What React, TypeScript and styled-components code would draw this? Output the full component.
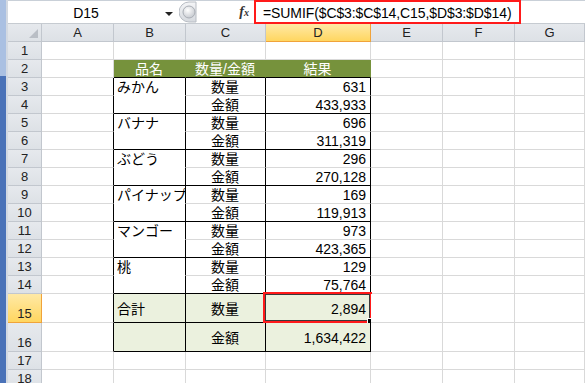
import React from 'react';
import styled, { createGlobalStyle } from 'styled-components';

const GlobalStyle = createGlobalStyle`
  html, body {
    margin: 0;
    padding: 0;
    background: #ffffff;
    overflow: hidden;
  }
  body {
    font-family: "Liberation Sans", "Noto Sans CJK JP", sans-serif;
    font-size: 14px;
    color: #000;
  }
`;

const GREEN = '#76923c';
const LIGHT = '#ebf1de';
const GRID = '#d9d9d9';

const Window = styled.div`
  display: flex;
  width: 585px;
  height: 383px;
  overflow: hidden;
`;

const SideBar = styled.div`
  width: 6px;
  flex-shrink: 0;
  background: linear-gradient(#aac0e2 0, #aac0e2 76px, #4a72b8 76px, #4a72b8 100%);
  border-right: 2px solid #d3d9e2;
`;

const Main = styled.div`
  flex: 1;
  display: flex;
  flex-direction: column;
  min-width: 0;
`;

const RibbonEdge = styled.div`
  height: 4px;
  background: #dfe4ea;
  border-bottom: 1px solid #c9d0d8;
`;

const FormulaBar = styled.div`
  height: 24px;
  display: flex;
  align-items: stretch;
  background: #ffffff;
  border-bottom: 1px solid #c6cbd1;
`;

const NameBox = styled.div`
  width: 170px;
  display: flex;
  align-items: center;
  position: relative;
`;

const NameText = styled.span`
  flex: 1;
  text-align: center;
  font-size: 14px;
  padding-right: 14px;
  padding-top: 1px;
`;

const Caret = styled.span`
  position: absolute;
  right: 5px;
  top: 11px;
  width: 0;
  height: 0;
  border-left: 4px solid transparent;
  border-right: 4px solid transparent;
  border-top: 4px solid #222;
`;

const Splitter = styled.div`
  width: 20px;
  display: flex;
  align-items: center;
  justify-content: center;
`;

const FxButton = styled.span`
  width: 56px;
  display: flex;
  align-items: center;
  justify-content: flex-end;
  padding-right: 5px;
  box-sizing: border-box;
  font-family: "Liberation Serif", serif;
  font-style: italic;
  font-weight: bold;
  font-size: 14px;
  color: #333;

  sub {
    font-size: 10px;
    vertical-align: -1px;
  }
`;

const FormulaArea = styled.div`
  flex: 1;
  display: flex;
  align-items: stretch;
`;

const Callout = styled.div`
  display: flex;
  align-items: center;
  margin-top: -1px;
  margin-bottom: -1px;
  padding: 1px 8px 0 7px;
  border: 2px solid #ff1a1a;
  white-space: nowrap;
  font-size: 14px;
  letter-spacing: -0.1px;
`;

const Sheet = styled.div`
  display: grid;
  grid-template-columns: 34px 72px 72px 80px 105px 72px 72px 1fr;
  grid-template-rows: 18px repeat(14, 18px) 29px 29px 18px 18px;
`;

type Edge = 'grid' | 'black' | 'none';

const Header = styled.div<{ $active?: boolean; $row?: boolean }>`
  box-sizing: border-box;
  display: flex;
  justify-content: center;
  align-items: ${({ $row }) => ($row ? 'flex-end' : 'center')};
  font-size: 13px;
  color: #222;
  background: ${({ $active }) =>
    $active ? 'linear-gradient(#ffe9a6, #ffd660)' : 'linear-gradient(#e6e9ed, #dde1e6)'};
  border-right: 1px solid ${({ $active }) => ($active ? '#f0a33a' : '#c2c7ce')};
  border-bottom: 1px solid ${({ $active }) => ($active ? '#f0a33a' : '#c2c7ce')};
  line-height: 16px;
`;

const Corner = styled(Header)`
  position: relative;

  &::after {
    content: '';
    position: absolute;
    right: 3px;
    bottom: 3px;
    width: 0;
    height: 0;
    border-left: 9px solid transparent;
    border-bottom: 9px solid #b9bec5;
  }
`;

const edgeColor = (edge: Edge, fill: string) =>
  edge === 'black' ? '#000' : edge === 'none' ? fill : fill === '#ffffff' ? GRID : fill;

const Cell = styled.div<{
  $right: Edge;
  $bottom: Edge;
  $fill: string;
  $align: 'left' | 'center' | 'right';
  $color?: string;
  $selected?: boolean;
}>`
  box-sizing: border-box;
  position: relative;
  display: flex;
  align-items: center;
  justify-content: ${({ $align }) =>
    $align === 'left' ? 'flex-start' : $align === 'right' ? 'flex-end' : 'center'};
  padding: 1px 4px 0 3px;
  background: ${({ $fill }) => $fill};
  color: ${({ $color }) => $color || '#000'};
  border-right: 1px solid ${({ $right, $fill }) => edgeColor($right, $fill)};
  border-bottom: 1px solid ${({ $bottom, $fill }) => edgeColor($bottom, $fill)};
  white-space: nowrap;
  overflow: ${({ $selected }) => ($selected ? 'visible' : 'hidden')};
  font-size: 14px;
  line-height: 16px;
`;

const Selection = styled.div`
  position: absolute;
  left: -3px;
  top: -2px;
  right: -2px;
  bottom: -1px;
  border: 2px solid #ff1a1a;
  box-shadow: inset 0 0 0 1px #3a3a3a;
  pointer-events: none;
`;

const Handle = styled.div`
  position: absolute;
  right: -4px;
  bottom: -4px;
  width: 5px;
  height: 5px;
  background: #000;
  border: 1px solid #fff;
`;

const columns = ['A', 'B', 'C', 'D', 'E', 'F', 'G'];

const fruits: [string, number, number][] = [
  ['みかん', 631, 433933],
  ['バナナ', 696, 311319],
  ['ぶどう', 296, 270128],
  ['パイナップル', 169, 119913],
  ['マンゴー', 973, 423365],
  ['桃', 129, 75764],
];

const fmt = (n: number) => n.toLocaleString('en-US');

const rowCount = 18;

function cellText(r: number, c: number): string {
  if (r === 2) return ['', '品名', '数量/金額', '結果'][c] || '';
  if (r >= 3 && r <= 14) {
    const [name, qty, amt] = fruits[Math.floor((r - 3) / 2)];
    const first = (r - 3) % 2 === 0;
    if (c === 1) return first ? name : '';
    if (c === 2) return first ? '数量' : '金額';
    if (c === 3) return fmt(first ? qty : amt);
  }
  if (r === 15) return ['', '合計', '数量', '2,894'][c] || '';
  if (r === 16) return ['', '', '金額', '1,634,422'][c] || '';
  return '';
}

function cellProps(r: number, c: number) {
  const inTable = c >= 1 && c <= 3;
  const body = r >= 3 && r <= 16;
  let fill = '#ffffff';
  if (inTable && r === 2) fill = GREEN;
  if (inTable && (r === 15 || r === 16)) fill = LIGHT;

  let right: Edge = 'grid';
  if ((c === 0 || inTable) && body) right = 'black';
  if ((c === 1 || c === 2) && r === 2) right = 'none';

  let bottom: Edge = 'grid';
  if (inTable) {
    if (r === 2 || (r >= 4 && r <= 14 && r % 2 === 0) || r === 15 || r === 16) bottom = 'black';
    else if (r >= 3 && r <= 13 && c === 1) bottom = 'none';
  }

  const align: 'left' | 'center' | 'right' =
    c === 1 && r !== 2 ? 'left' : c === 3 && r !== 2 ? 'right' : 'center';
  return { fill, right, bottom, align, color: r === 2 && inTable ? '#ffffff' : undefined };
}

const FxSplitter = () => (
  <svg width="18" height="22" viewBox="0 0 18 22">
    <defs>
      <linearGradient id="pill" x1="0" y1="0" x2="0" y2="1">
        <stop offset="0" stopColor="#f4f5f7" />
        <stop offset="1" stopColor="#d5d9de" />
      </linearGradient>
      <radialGradient id="knob" cx="0.4" cy="0.35" r="0.7">
        <stop offset="0" stopColor="#ffffff" />
        <stop offset="1" stopColor="#c4c8ce" />
      </radialGradient>
    </defs>
    <path d="M17 1 H10 A10 10 0 0 0 10 21 H17 Z" fill="url(#pill)" stroke="#b8bdc4" />
    <circle cx="10" cy="11" r="6" fill="url(#knob)" stroke="#a9aeb5" />
  </svg>
);

export default function App() {
  return (
    <>
      <GlobalStyle />
      <Window>
        <SideBar />
        <Main>
          <RibbonEdge />
          <FormulaBar>
            <NameBox>
              <NameText>D15</NameText>
              <Caret />
            </NameBox>
            <Splitter>
              <FxSplitter />
            </Splitter>
            <FxButton>
              f<sub>x</sub>
            </FxButton>
            <FormulaArea>
              <Callout>=SUMIF($C$3:$C$14,C15,$D$3:$D$14)</Callout>
            </FormulaArea>
          </FormulaBar>
          <Sheet>
            <Corner />
            {columns.map((col) => (
              <Header key={col} $active={col === 'D'}>
                {col}
              </Header>
            ))}
            {Array.from({ length: rowCount }, (_, i) => {
              const r = i + 1;
              return (
                <React.Fragment key={r}>
                  <Header $row $active={r === 15}>
                    {r}
                  </Header>
                  {columns.map((col, c) => {
                    const p = cellProps(r, c);
                    const selected = r === 15 && c === 3;
                    return (
                      <Cell
                        key={col}
                        $fill={p.fill}
                        $right={p.right}
                        $bottom={p.bottom}
                        $align={p.align}
                        $color={p.color}
                        $selected={selected}
                      >
                        {cellText(r, c)}
                        {selected && (
                          <Selection>
                            <Handle />
                          </Selection>
                        )}
                      </Cell>
                    );
                  })}
                </React.Fragment>
              );
            })}
          </Sheet>
        </Main>
      </Window>
    </>
  );
}
